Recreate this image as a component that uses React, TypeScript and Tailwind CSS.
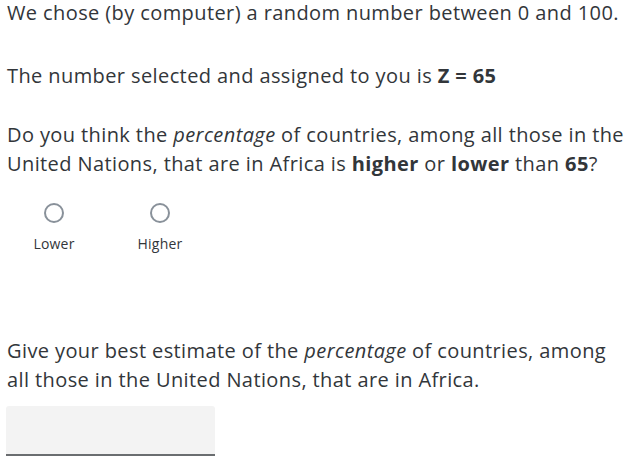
export default function App() {
  return (
    <div className="w-[634px] h-[462px] overflow-hidden bg-white text-[#32363a] font-['Open_Sans',sans-serif] tracking-[0.4px]">
      <div className="px-[7px] w-[634px]">
        <p className="text-[20px] leading-[29px] mt-[-2px]">We chose (by computer) a random number between 0 and 100.</p>
        <p className="text-[20px] leading-[29px] mt-[34px]">
          The number selected and assigned to you is <b>Z = 65</b>
        </p>

        <p className="text-[20px] leading-[29px] mt-[30px]">
          Do you think the <i>percentage</i> of countries, among all those in the United Nations, that are in Africa
          is <b>higher</b> or <b>lower</b> than <b>65</b>?
        </p>

        <div className="flex mt-[25px] ml-[-6px]">
          {["Lower", "Higher"].map((label) => (
            <label key={label} className="w-[106px] flex flex-col items-center">
              <span className="w-[20px] h-[20px] rounded-full border-2 border-[#89919a] bg-white" />
              <span className="text-[14px] leading-[18px] mt-[12px] tracking-[0.2px]">{label}</span>
            </label>
          ))}
        </div>

        <p className="text-[20px] leading-[29px] mt-[83px]">
          Give your best estimate of the <i>percentage</i> of countries, among all those in the United Nations, that
          are in Africa.
        </p>

        <input
          type="text"
          className="block mt-[12px] ml-[-1px] w-[209px] h-[50px] bg-[#f3f3f3] border-b-[2px] border-[#6a6d70] rounded-t-[3px] outline-none px-2"
        />
      </div>
    </div>
  );
}
